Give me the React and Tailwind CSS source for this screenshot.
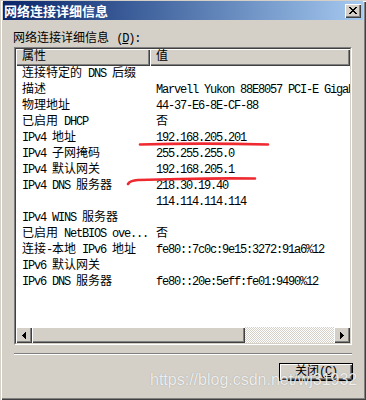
import React from "react";

const rows = [
    ["连接特定的 DNS 后缀", ""],
    ["描述", "Marvell Yukon 88E8057 PCI-E Gigabit Ethernet Controller"],
    ["物理地址", "44-37-E6-8E-CF-88"],
    ["已启用 DHCP", "否"],
    ["IPv4 地址", "192.168.205.201"],
    ["IPv4 子网掩码", "255.255.255.0"],
    ["IPv4 默认网关", "192.168.205.1"],
    ["IPv4 DNS 服务器", "218.30.19.40"],
    ["", "114.114.114.114"],
    ["IPv4 WINS 服务器", ""],
    ["已启用 NetBIOS ove...", "否"],
    ["连接-本地 IPv6 地址", "fe80::7c0c:9e15:3272:91a6%12"],
    ["IPv6 默认网关", ""],
    ["IPv6 DNS 服务器", "fe80::20e:5eff:fe01:9490%12"],
];

// ascii runs get squeezed to ~6px per char like SimSun's half-width glyphs
const T = ({ s }) =>
    s
        .split(/([\x20-\x7e]+)/)
        .filter(Boolean)
        .map((p, i) =>
            /^[\x20-\x7e]+$/.test(p) ? (
                <span key={i} className="tracking-[-1.2px]">
                    {p}
                </span>
            ) : (
                <span key={i}>{p}</span>
            )
        );

const xPixels = [
    [0, 0], [1, 0], [6, 0], [7, 0],
    [1, 1], [2, 1], [5, 1], [6, 1],
    [2, 2], [3, 2], [4, 2], [5, 2],
    [3, 3], [4, 3],
    [2, 4], [3, 4], [4, 4], [5, 4],
    [1, 5], [2, 5], [5, 5], [6, 5],
    [0, 6], [1, 6], [6, 6], [7, 6],
];

const raised =
    "shadow-[inset_1px_1px_0_#ffffff,inset_-1px_-1px_0_#404040,inset_-2px_-2px_0_#808080]";

const App = () => {
    return (
        <div className="relative h-[400px] w-[366px] overflow-hidden bg-[#d4d0c8] px-[3px] pt-[1px] font-['Liberation_Mono','Noto_Sans_CJK_SC',monospace] text-[12px] text-black shadow-[inset_1px_1px_0_#d4d0c8,inset_2px_2px_0_#ffffff,inset_-1px_-1px_0_#404040,inset_-2px_-2px_0_#808080]">
            {/* title bar */}
            <div className="flex h-[19px] items-center justify-between bg-linear-to-r from-[#0a246a] to-[#a6caf0] pl-[1px] pr-[2px]">
                <span className="font-['Noto_Sans_CJK_SC',sans-serif] text-[13px] font-bold leading-[19px] text-white">
                    网络连接详细信息
                </span>
                <div className={`flex h-[14px] w-[16px] items-center justify-center bg-[#d4d0c8] ${raised}`}>
                    <svg width="8" height="7" viewBox="0 0 8 7" shapeRendering="crispEdges">
                        {xPixels.map(([x, y], i) => (
                            <rect key={i} x={x} y={y} width="1" height="1" fill="#000" />
                        ))}
                    </svg>
                </div>
            </div>

            <div className="ml-[10px] mt-[12px] whitespace-pre leading-[14px]">
                网络连接详细信息 <span className="tracking-[-1.2px]">(<u>D</u>):</span>
            </div>

            {/* list view */}
            <div className="ml-[11px] mt-[1px] h-[298px] w-[338px] border border-b-white border-l-[#808080] border-r-white border-t-[#808080]">
                <div className="flex h-full flex-col border border-b-[#d4d0c8] border-l-[#404040] border-r-[#d4d0c8] border-t-[#404040] bg-white">
                    <div className="flex h-[17px] shrink-0 bg-[#d4d0c8] leading-[16px]">
                        <div className={`w-[134px] pl-[6px] ${raised}`}>属性</div>
                        <div className={`flex-1 pl-[6px] ${raised}`}>值</div>
                    </div>
                    <div className="flex-1">
                        {rows.map(([k, v], i) => (
                            <div key={i} className="flex h-[16px] whitespace-pre leading-[16px]">
                                <div className="w-[134px] overflow-hidden pl-[6px]">
                                    <T s={k} />
                                </div>
                                <div className="flex-1 overflow-hidden pl-[6px]">
                                    <T s={v} />
                                </div>
                            </div>
                        ))}
                    </div>
                    {/* horizontal scrollbar */}
                    <div className="flex h-[16px] shrink-0">
                        <div className={`flex w-[16px] items-center justify-center bg-[#d4d0c8] ${raised}`}>
                            <svg width="4" height="7" viewBox="0 0 4 7" shapeRendering="crispEdges">
                                <path d="M0 3.5 L4 0 L4 7 Z" fill="#000" />
                            </svg>
                        </div>
                        <div className={`w-[213px] bg-[#d4d0c8] ${raised}`} />
                        <div className="flex-1 [background:repeating-conic-gradient(#ffffff_0_25%,#d4d0c8_0_50%)_0_0/2px_2px]" />
                        <div className={`flex w-[16px] items-center justify-center bg-[#d4d0c8] ${raised}`}>
                            <svg width="4" height="7" viewBox="0 0 4 7" shapeRendering="crispEdges">
                                <path d="M4 3.5 L0 0 L0 7 Z" fill="#000" />
                            </svg>
                        </div>
                    </div>
                </div>
            </div>

            {/* etched separator */}
            <div className="ml-[11px] mt-[8px] h-[2px] w-[338px] border-b border-t border-b-white border-t-[#808080]" />

            <div className="mr-[10px] mt-[8px] flex justify-end">
                <div className="h-[18px] w-[74px] border border-black">
                    <div className={`flex h-full items-center justify-center whitespace-pre leading-[16px] ${raised}`}>
                        关闭<span className="tracking-[-1.2px]">(<u>C</u>)</span>
                    </div>
                </div>
            </div>

            {/* hand-drawn red marks */}
            <svg className="pointer-events-none absolute left-0 top-0" width="366" height="400">
                <path d="M140 144.5 Q200 142.8 268 144.5" stroke="#ee2a30" strokeWidth="2.6" fill="none" strokeLinecap="round" />
                <path d="M128 184 Q130 180.5 138 180 L180 179 Q220 178 255 178.5" stroke="#ee2a30" strokeWidth="2.6" fill="none" strokeLinecap="round" />
            </svg>

            {/* watermark */}
            <div className="pointer-events-none absolute left-[150px] top-[370px] font-['Liberation_Sans',Arial,sans-serif] text-[16px] leading-[20px] text-white/85 [text-shadow:0_0_1px_rgba(0,0,0,0.35)]">
                https://blog.csdn.net/wj31932
            </div>
        </div>
    );
};

export default App;
